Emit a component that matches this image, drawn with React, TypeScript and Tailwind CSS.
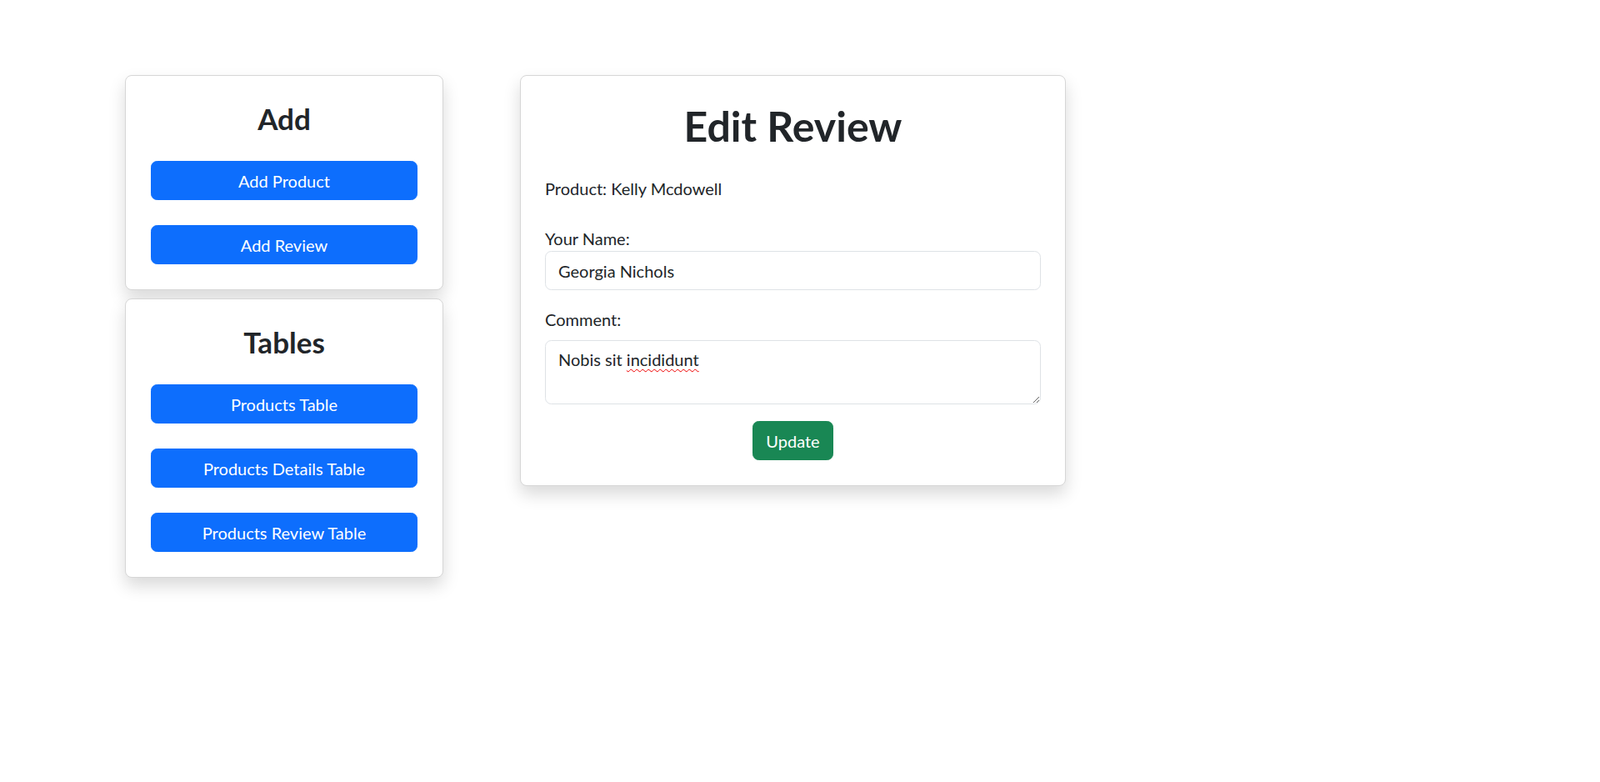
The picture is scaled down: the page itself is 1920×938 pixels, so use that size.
import { useState } from 'react'

const blueBtn =
  'h-[47px] w-full rounded-[7.5px] border border-[#0d6efd] bg-[#0d6efd] text-[20px] leading-[30px] text-white'

function MenuCard({ title, items }: { title: string; items: string[] }) {
  return (
    <div className="rounded-[8px] border border-[#d6d6d6] bg-white p-[30px] shadow-[0_10px_20px_rgba(0,0,0,0.15)]">
      <h3 className="mb-[30px] text-center text-[35px] font-bold leading-[42px]">{title}</h3>
      <div className="flex flex-col gap-[30px]">
        {items.map((label) => (
          <button key={label} className={blueBtn}>
            {label}
          </button>
        ))}
      </div>
    </div>
  )
}

export default function App() {
  const [name, setName] = useState('Georgia Nichols')
  const [comment, setComment] = useState('Nobis sit incididunt')

  return (
    <div className="min-h-screen bg-white font-['Lato','Open_Sans',sans-serif] text-[20px] leading-[30px] text-[#212529]">
      <div className="flex items-start gap-[92px] pl-[150px] pt-[90px]">
        {/* Left column: add + tables */}
        <div className="flex w-[382px] flex-col gap-[10px]">
          <MenuCard title="Add" items={['Add Product', 'Add Review']} />
          <MenuCard title="Tables" items={['Products Table', 'Products Details Table', 'Products Review Table']} />
        </div>

        {/* Edit form */}
        <div className="w-[655px] rounded-[8px] border border-[#d6d6d6] bg-white px-[29px] py-[30px] shadow-[0_10px_20px_rgba(0,0,0,0.15)]">
          <h1 className="mb-[30px] text-center text-[50px] font-bold leading-[60px]">Edit Review</h1>
          <p className="mb-[30px]">Product: Kelly Mcdowell</p>

          <label className="block">Your Name:</label>
          <input
            value={name}
            onChange={(e) => setName(e.target.value)}
            className="mb-[20px] block h-[47px] w-full rounded-[7.5px] border border-[#dee2e6] px-[15px] text-[20px] text-[#212529] outline-none"
          />

          <label className="mb-[10px] block">Comment:</label>
          <div className="relative mb-[20px]">
            <textarea
              value={comment}
              onChange={(e) => setComment(e.target.value)}
              spellCheck={false}
              className="block h-[77px] w-full rounded-[7.5px] border border-[#dee2e6] px-[15px] py-[7px] text-[20px] leading-[30px] text-[#212529] outline-none"
            />
            {/* spell-check squiggle */}
            <div className="pointer-events-none absolute left-[16px] top-[8px] text-[20px] leading-[30px] text-transparent">
              Nobis sit{' '}
              <span className="underline decoration-[#e00] decoration-wavy decoration-1 underline-offset-[3px]">
                incididunt
              </span>
            </div>
          </div>

          <div className="flex justify-center">
            <button className="h-[47px] rounded-[7.5px] border border-[#198754] bg-[#198754] px-[15px] text-[20px] leading-[30px] text-white">
              Update
            </button>
          </div>
        </div>
      </div>
    </div>
  )
}
